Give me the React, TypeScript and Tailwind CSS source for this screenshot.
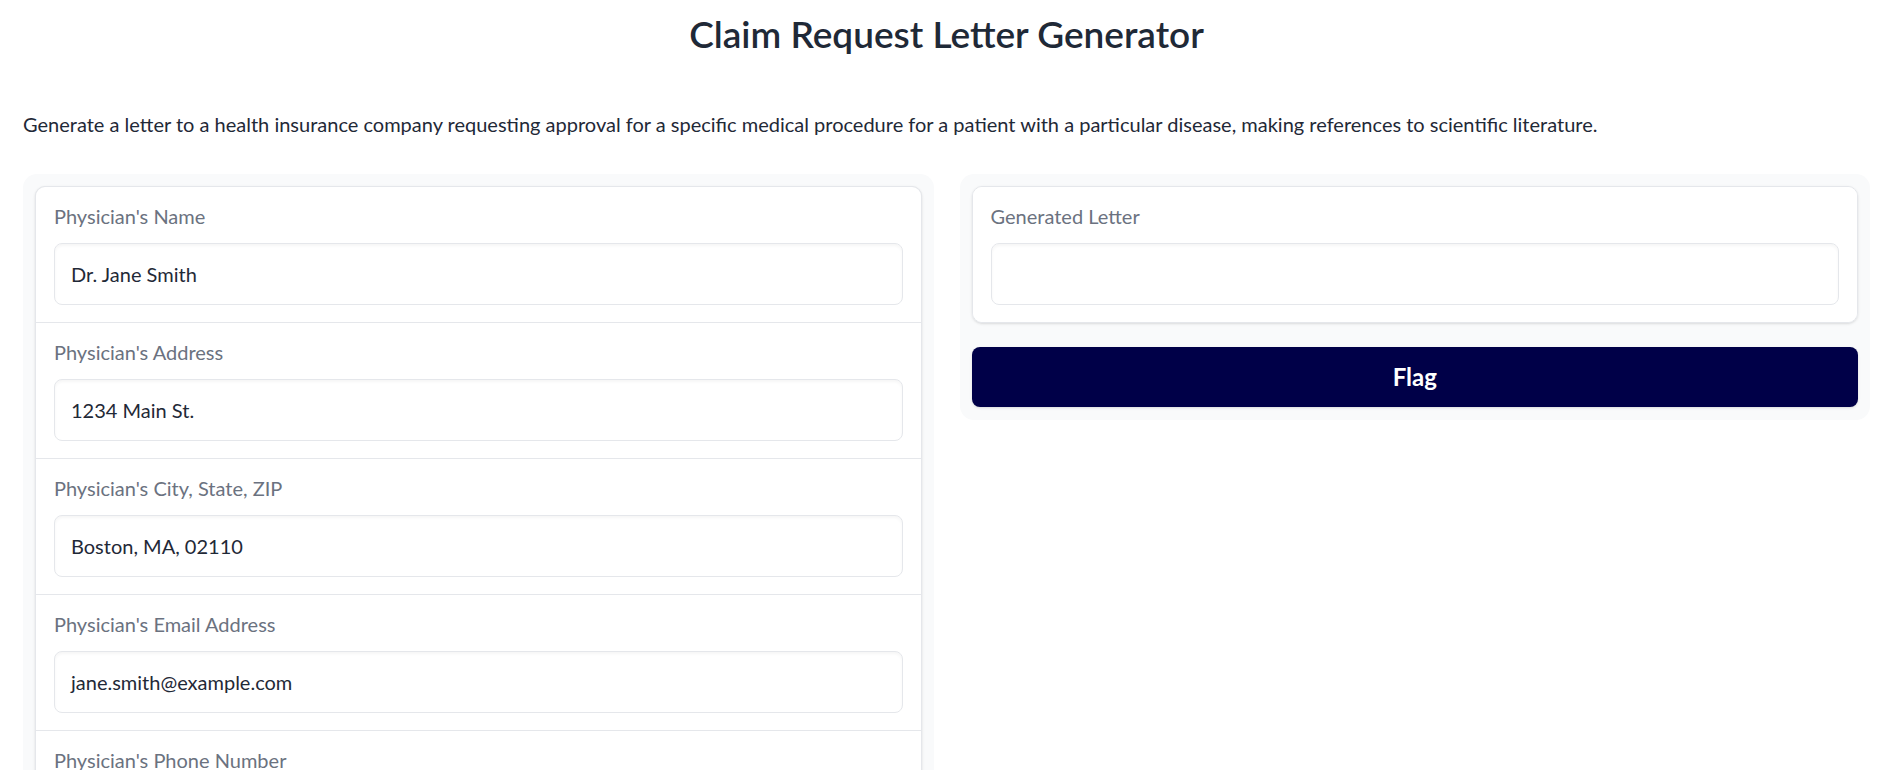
import React from "react";

type Field = { label: string; value: string };

const fields: Field[] = [
  { label: "Physician's Name", value: "Dr. Jane Smith" },
  { label: "Physician's Address", value: "1234 Main St." },
  { label: "Physician's City, State, ZIP", value: "Boston, MA, 02110" },
  { label: "Physician's Email Address", value: "jane.smith@example.com" },
  { label: "Physician's Phone Number", value: "(617) 555-1234" },
  { label: "Patient's Name", value: "John Doe" },
];

function TextField({ label, value }: Field) {
  return (
    <div className="px-[18px] pt-[17px] pb-[17px] bg-white">
      <div className="text-[20px] leading-[24px] text-[#6b7280]">{label}</div>
      <div className="mt-[15px] h-[62px] rounded-[8px] border border-[#e5e7eb] shadow-[inset_0_2px_3px_rgba(0,0,0,0.04)] px-[16px] flex items-center text-[20px] text-[#1f2937]">
        {value}
      </div>
    </div>
  );
}

export default function App() {
  return (
    <main className="min-h-screen bg-white text-[#1f2937]" style={{ fontFamily: "Lato, 'Noto Sans', sans-serif" }}>
      <div className="pl-[23px] pr-[19px] pb-10">
        <h1 className="pt-[10px] text-center text-[37px] leading-[48px] font-semibold text-[#1f2937]">
          Claim Request Letter Generator
        </h1>

        <p className="mt-[52px] text-[20px] leading-[28px]">
          Generate a letter to a health insurance company requesting approval for a specific medical procedure for a patient with a particular disease, making references to scientific literature.
        </p>

        <div className="mt-[36px] grid grid-cols-2 gap-[26px] items-start">
          <div className="rounded-[14px] bg-[#f9fafb] p-[12px]">
            <div className="rounded-[10px] border border-[#e5e7eb] bg-[#e5e7eb] overflow-hidden flex flex-col gap-px shadow-sm">
              {fields.map((f) => (
                <TextField key={f.label} label={f.label} value={f.value} />
              ))}
            </div>
          </div>

          <div className="rounded-[14px] bg-[#f9fafb] p-[12px] pb-[13px]">
            <div className="rounded-[10px] border border-[#e5e7eb] overflow-hidden shadow-sm">
              <TextField label="Generated Letter" value="" />
            </div>
            <button className="mt-[24px] w-full h-[60px] rounded-[8px] bg-[#000048] text-white text-[24px] font-bold shadow-sm">
              Flag
            </button>
          </div>
        </div>
      </div>
    </main>
  );
}
